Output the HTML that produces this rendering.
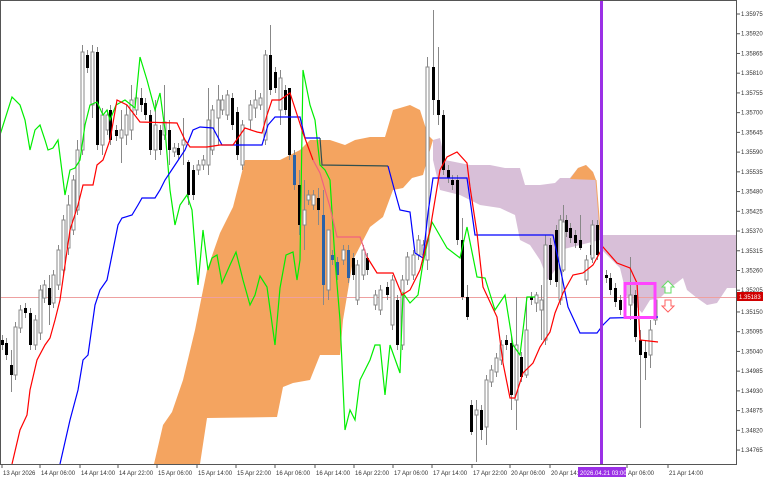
<!DOCTYPE html>
<html><head><meta charset="utf-8"><style>
html,body{margin:0;padding:0;background:#fff;width:768px;height:480px;overflow:hidden;font-family:"Liberation Sans",sans-serif}
svg{position:absolute;left:0;top:0}
</style></head><body>
<svg id="s" width="768" height="480" xmlns="http://www.w3.org/2000/svg" font-family="Liberation Sans, sans-serif">
<rect x="0" y="0" width="768" height="480" fill="#fff"/>
<polygon fill="#f4a460" points="154,464 163,425 172,412 183,380 195,330 207,270 220,233 233,207 245,160 280,160 290,155 300,150 310,140 330,140 345,145 355,140 370,137 385,137 393,110 400,108 410,105 420,110 428,135 433,140 428,157 423,175 412,178 403,188 393,190 383,217 370,227 353,260 343,320 340,355 320,355 310,380 293,383 283,387 277,417 207,418 200,464"/>
<polygon fill="#d8bfd8" points="433,140 440,138 445,160 470,165 490,165 505,168 520,168 525,185 540,185 555,183 560,178 570,178 578,168 586,165 593,172 596,180 600,230 600,240 560,250 555,270 548,280 540,260 530,245 520,240 515,215 500,208 480,205 470,200 460,195 440,190 433,160"/>
<polygon fill="#f4a460" points="570,179 578,168 586,165 593,172 596,180"/>
<polygon fill="#d8bfd8" points="602,235 736,235 736,288 727,288 717,303 707,305 697,298 687,290 683,278 670,288 660,298 650,300 642,313 635,305 627,297 620,268 602,250"/>
<line x1="0" y1="297.5" x2="736" y2="297.5" stroke="#eea0a0" stroke-width="1"/>
<g id="candles"></g>
<polyline fill="none" stroke="#00ee00" stroke-width="1.2" points="0,135 12,97 20,105 25,120 30,150 35,130 40,125 45,140 48,150 53,148 58,140 65,195 70,170 75,168 80,160 85,125 90,105 97,102 103,115 107,110 110,120 116,105 125,100 135,108 140,57 147,80 155,110 160,93 165,130 170,190 175,225 180,205 187,195 192,210 198,285 203,230 208,270 212,258 217,255 222,283 230,265 236,252 243,280 250,305 255,295 260,276 267,287 275,345 280,288 286,255 293,252 297,280 300,260 303,70 310,105 315,120 320,165 325,170 330,180 335,260 340,320 345,430 350,410 355,420 360,380 370,360 375,345 380,345 385,395 390,345 400,373 403,293 410,303 418,295 423,263 432,222 447,248 460,258 467,227 477,277 485,278 495,310 505,295 513,345 520,355 527,297 535,297"/>
<polyline fill="none" stroke="#0000ff" stroke-width="1.2" points="60,464 70,420 78,390 83,360 88,355 95,305 100,290 107,280 113,250 118,225 122,218 132,215 138,205 142,198 155,198 160,190 165,180 175,165 185,150 193,130 200,127 213,128 222,145 262,145 268,125 275,117 300,117 305,138 320,138"/>
<polyline fill="none" stroke="#2f4f4f" stroke-width="1.2" points="320,138 322,165 388,166"/>
<polyline fill="none" stroke="#0000ff" stroke-width="1.2" points="388,166 395,192 400,210 410,212 415,253 423,258 428,213 433,178 467,178 475,235 553,235 562,277 568,307 580,333 597,333 603,325 610,318 658,317"/>
<polyline fill="none" stroke="#ff0000" stroke-width="1.2" points="12,464 20,430 27,415 30,390 37,360 45,345 50,338 55,320 60,300 65,265 70,230 78,205 83,185 93,185 97,165 103,160 110,140 117,100 127,105 140,122 177,123 185,140 190,147 207,147 220,145 233,145 245,128 257,132 262,133 267,115 272,100 280,100 290,93 303,133 313,160"/>
<polyline fill="none" stroke="#f06080" stroke-width="1.2" points="313,160 320,173 330,207 337,237 360,237 367,257"/>
<polyline fill="none" stroke="#ff0000" stroke-width="1.2" points="367,257 377,273 393,273 402,295 410,290 420,270 425,250 430,230 440,170 447,157 457,152 467,163 470,187 477,233 483,287 497,317 503,363 510,398 515,398 523,373 533,363 540,347 550,332 555,313 563,293 573,275 583,273 593,265 603,247 617,263 630,268 637,283 640,340 658,342"/>
<line x1="596" y1="180" x2="600" y2="230" stroke="#f4a460" stroke-width="1"/>
<rect x="600" y="0" width="3" height="464" fill="#9b30e6"/>
<rect x="625" y="283.5" width="30" height="34" fill="none" stroke="#ff44ff" stroke-width="3"/>
<path d="M665,293 L665,287 L662,287 L668,281 L674,287 L671,287 L671,293 Z" fill="#fff" stroke="#66dd66" stroke-width="1"/>
<path d="M665,300 L665,306 L662,306 L668,312 L674,306 L671,306 L671,300 Z" fill="#fff" stroke="#ff6060" stroke-width="1"/>
<rect x="0.5" y="0.5" width="736" height="464" fill="none" stroke="#555" stroke-width="1"/>
<g id="axis" font-size="6" fill="#333"></g>
<rect x="737" y="292" width="26" height="9" fill="#d00000"/>
<text x="739" y="299" font-size="6" fill="#fff">1.35183</text>
<rect x="578" y="467" width="48" height="10" fill="#9b30e6"/>
<text x="580" y="475" font-size="6" fill="#fff">2026.04.21 03:00</text>
</svg>
<script>
var s="http://www.w3.org/2000/svg";
function el(n,a,p){var e=document.createElementNS(s,n);for(var k in a)e.setAttribute(k,a[k]);p.appendChild(e);return e;}
var C=[[2,340,345,'b',335,350],[6,343,355,'b'],[11,365,375,'b',350,392],[15,327,375,'w',322,380],[20,310,328,'w'],[25,308,313,'b'],[30,313,345,'b'],[35,320,345,'w'],[40,290,333,'w',285,340],[44,285,298,'w'],[49,288,305,'b',275,325],[53,275,303,'w'],[58,250,285,'w'],[63,220,270,'w'],[68,205,248,'w',195,255],[73,180,230,'w'],[77,150,210,'w',140,215],[82,52,150,'w',45,155],[87,55,68,'b'],[92,52,105,'w',45,118],[97,52,145,'b'],[102,115,145,'w',108,155],[107,115,130,'w'],[110,110,140,'b'],[116,130,136,'b'],[121,130,138,'w',110,163],[126,115,135,'w',105,145],[131,100,130,'w',85,140],[136,98,110,'w'],[141,98,105,'b',88,112],[145,103,115,'b'],[150,115,150,'b'],[155,125,150,'w',100,160],[160,130,150,'b'],[164,122,135,'w',85,140],[169,130,150,'b',120,165],[174,148,152,'w'],[178,148,155,'b'],[183,140,145,'w',118,165],[188,162,195,'b',160,205],[193,170,195,'b'],[198,165,170,'w'],[203,160,165,'w'],[208,120,165,'w',88,175],[212,110,150,'w'],[218,100,118,'w',85,145],[222,100,110,'w'],[227,95,115,'w'],[232,98,125,'b'],[237,112,155,'b'],[242,125,165,'w'],[250,105,120,'w',100,130],[255,100,108,'w',90,118],[260,98,105,'w'],[265,55,140,'w'],[270,55,90,'b',25,95],[275,72,88,'b'],[280,78,110,'w',70,125],[285,90,110,'b'],[289,88,155,'b',88,160],[294,155,185,'u'],[299,185,225,'b',170,235],[304,210,225,'w',180,250],[308,195,200,'w'],[313,195,205,'w'],[318,198,210,'b',188,225],[323,215,285,'u',190,305],[328,230,290,'w',230,300],[332,255,260,'u'],[337,262,275,'u'],[343,250,260,'w'],[348,250,278,'u'],[353,258,275,'b'],[357,265,300,'w',260,305],[363,250,275,'w'],[367,258,270,'b'],[375,295,305,'w'],[380,290,310,'w'],[387,287,295,'b'],[392,280,325,'w'],[397,300,345,'b'],[402,280,345,'w'],[407,257,280,'w'],[413,255,275,'w'],[418,240,255,'w'],[423,245,255,'w'],[427,67,260,'w',57,270],[433,67,100,'b',10,115],[438,100,115,'b',47,125],[443,115,170,'b'],[448,170,178,'b'],[452,180,185,'b'],[457,180,240,'b'],[462,240,297,'b',218,300],[467,297,317,'b',285,320],[471,405,432,'b',400,435],[476,410,415,'w',400,462],[481,410,430,'b',405,440],[486,380,427,'w',375,445],[491,370,382,'w'],[496,358,372,'w'],[501,345,360,'w'],[506,340,345,'b'],[511,343,395,'b',335,410],[516,345,400,'w',297,430],[521,357,377,'b'],[526,330,375,'w',297,378],[531,297,300,'b'],[536,295,303,'w',292,312],[541,300,310,'w',285,340],[545,245,340,'w',235,345],[550,245,280,'b',238,285],[556,230,282,'b'],[560,220,300,'w'],[563,222,270,'w',205,272],[566,220,232,'b'],[570,228,238,'b'],[575,235,243,'b'],[580,240,248,'b',215,250],[586,260,280,'w',255,285],[591,245,255,'b'],[592,225,258,'w'],[597,225,255,'b'],[606,275,278,'b'],[610,278,290,'b'],[615,288,302,'b'],[620,300,310,'b'],[630,295,305,'w',257,320],[635,295,337,'b'],[640,340,355,'b',330,428],[645,352,358,'b',340,380],[650,330,355,'w',320,368],[655,300,320,'w',282,325]];
var g=document.getElementById('candles');
C.forEach(function(c){var x=c[0],t=c[1],b=c[2],k=c[3],wt=c[4]||t-5,wb=c[5]||b+5;
el('line',{x1:x+.5,x2:x+.5,y1:wt,y2:wb,stroke:'#888','stroke-width':1},g);
var f=k=='w'?'#fff':(k=='u'?'#2a62a8':'#000');
el('rect',{x:x-1,y:t,width:3,height:Math.max(1,b-t),fill:f,stroke:k=='w'?'#888':f,'stroke-width':k=='w'?1:0},g);});
var a=document.getElementById('axis');
var p=['1.35975','1.35920','1.35865','1.35810','1.35755','1.35700','1.35645','1.35590','1.35535','1.35480','1.35425','1.35370','1.35315','1.35260','1.35205','1.35150','1.35095','1.35040','1.34985','1.34930','1.34875','1.34820','1.34765'];
p.forEach(function(v,i){var y=14+i*19.73;if(i>=15)y+=2;el('line',{x1:737,x2:740,y1:y,y2:y,stroke:'#555'},a);var t=el('text',{x:741,y:y+2},a);t.textContent=v;});
var L=[[2,'13 Apr 2026'],[40,'14 Apr 06:00'],[80,'14 Apr 14:00'],[118,'14 Apr 22:00'],[157,'15 Apr 06:00'],[197,'15 Apr 14:00'],[236,'15 Apr 22:00'],[275,'16 Apr 06:00'],[315,'16 Apr 14:00'],[354,'16 Apr 22:00'],[393,'17 Apr 06:00'],[432,'17 Apr 14:00'],[472,'17 Apr 22:00'],[510,'20 Apr 06:00'],[550,'20 Apr 14:00'],[627,'Apr 06:00'],[668,'21 Apr 14:00']];
L.forEach(function(l){el('line',{x1:l[0],x2:l[0],y1:464,y2:468,stroke:'#555'},a);var t=el('text',{x:l[0]+1,y:475},a);t.textContent=l[1];});
</script>
</body></html>
